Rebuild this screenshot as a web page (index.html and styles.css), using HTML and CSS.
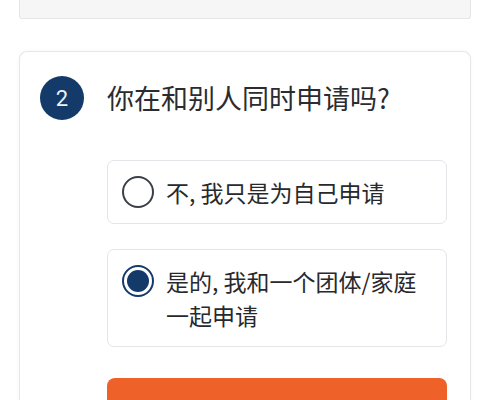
FILE: index.html
```html
<!DOCTYPE html>
<html lang="zh-CN">
<head>
    <meta charset="UTF-8">
    <meta name="viewport" content="width=device-width, initial-scale=1.0">
    <title>申请</title>
    <link rel="stylesheet" href="styles.css">
</head>
<body>
    <div class="prev-card"></div>

    <div class="question-card">
        <div class="question-header">
            <div class="step-badge">2</div>
            <h2 class="question-title">你在和别人同时申请吗?</h2>
        </div>

        <div class="options">
            <label class="option">
                <span class="radio"></span>
                <span class="option-text">不, 我只是为自己申请</span>
            </label>
            <label class="option">
                <span class="radio checked"></span>
                <span class="option-text">是的, 我和一个团体/家庭一起申请</span>
            </label>
        </div>

        <button class="btn-next" aria-label="继续"></button>
    </div>
</body>
</html>
```

FILE: styles.css
```css
* {
    margin: 0;
    padding: 0;
    box-sizing: border-box;
}

body {
    font-family: "Noto Sans CJK SC", "Noto Sans", sans-serif;
    background: #ffffff;
    color: #2d2f33;
    width: 500px;
    overflow: hidden;
}

.prev-card {
    height: 19px;
    margin: 0 29px 0 19px;
    background: #f6f6f7;
    border: 1px solid #e5e6e9;
    border-top: none;
    border-radius: 0 0 3px 3px;
}

.question-card {
    margin: 32px 29px 0 19px;
    padding: 24px 23px 0 20px;
    background: #ffffff;
    border: 1px solid #e6e7ea;
    border-bottom: none;
    border-radius: 8px 8px 0 0;
    box-shadow: 0 0 4px rgba(0, 0, 0, 0.04);
}

.question-header {
    display: flex;
    align-items: center;
    gap: 23px;
}

.step-badge {
    width: 44px;
    height: 44px;
    border-radius: 50%;
    background: #143a6a;
    color: #eef2f8;
    font-family: "Roboto", "Liberation Sans", sans-serif;
    font-size: 22px;
    display: flex;
    align-items: center;
    justify-content: center;
    flex-shrink: 0;
}

.question-title {
    font-size: 27px;
    font-weight: 400;
    color: #2a2c30;
    line-height: 1.2;
}

.options {
    margin: 40px 0 0 67px;
    display: flex;
    flex-direction: column;
    gap: 25px;
}

.option {
    display: flex;
    align-items: flex-start;
    gap: 12px;
    padding: 14px 14px;
    border: 1px solid #e4e5e8;
    border-radius: 7px;
    background: #ffffff;
}

.radio {
    width: 32px;
    height: 32px;
    margin-top: 1px;
    border-radius: 50%;
    border: 2px solid #3b4048;
    flex-shrink: 0;
    display: flex;
    align-items: center;
    justify-content: center;
}

.radio.checked {
    border-color: #143a6a;
}

.radio.checked::after {
    content: "";
    width: 22px;
    height: 22px;
    border-radius: 50%;
    background: #143a6a;
}

.option-text {
    font-size: 23px;
    line-height: 34px;
    color: #27292d;
    padding-right: 14px;
}

.btn-next {
    display: block;
    width: calc(100% - 67px);
    margin: 31px 0 0 67px;
    height: 50px;
    border: none;
    border-radius: 8px;
    background: #ee6129;
}
```
